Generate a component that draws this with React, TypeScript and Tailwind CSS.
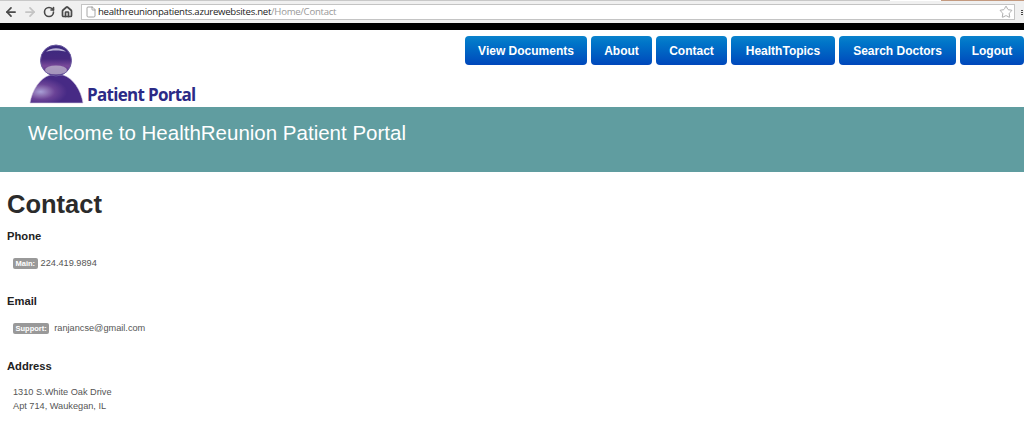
import React from 'react';
import { ArrowLeft, ArrowRight, RotateCw, House, File, Star } from 'lucide-react';

const navItems = [
  { label: 'View Documents', width: 'w-[122px]' },
  { label: 'About', width: 'w-[61px]' },
  { label: 'Contact', width: 'w-[71px]' },
  { label: 'HealthTopics', width: 'w-[104px]' },
  { label: 'Search Doctors', width: 'w-[117px]' },
  { label: 'Logout', width: 'w-[64px]' },
];

function Logo() {
  return (
    <div className="flex items-end h-[74px] pl-[29px]">
      <svg width="56" height="60" viewBox="0 0 56 60" className="shrink-0">
        <defs>
          <linearGradient id="headFill" x1="0" y1="0" x2="0" y2="1">
            <stop offset="0" stopColor="#3a2a7e" />
            <stop offset="0.45" stopColor="#46297f" />
            <stop offset="0.68" stopColor="#7a4a9a" />
            <stop offset="1" stopColor="#43287f" />
          </linearGradient>
          <radialGradient id="bodyGlow" cx="0.2" cy="0.6" r="0.5">
            <stop offset="0" stopColor="#a89fd6" />
            <stop offset="0.3" stopColor="#8a6cb0" />
            <stop offset="0.55" stopColor="#6a4296" />
            <stop offset="1" stopColor="#472a85" />
          </radialGradient>
        </defs>
        <path d="M1 59 C3 46 11 34 21 31 L34 31 C44 34 52 46 54 59 Z" fill="url(#bodyGlow)" stroke="#cfc8e0" strokeWidth="0.6" />
        <circle cx="27" cy="16.5" r="15.5" fill="url(#headFill)" stroke="#6a5aa0" strokeWidth="1" />
        <path d="M17 8 C21 3 33 3 37 8 C33 6 21 6 17 8 Z" fill="#c9c3e0" opacity="0.9" />
        <ellipse cx="27" cy="26" rx="11" ry="4.5" fill="#b9aec9" opacity="0.8" />
      </svg>
      <span className="font-['Open_Sans',sans-serif] font-bold text-[17px] leading-[22px] tracking-[-0.7px] text-[#2b2a86] ml-[2px] mb-[-2px]">
        Patient Portal
      </span>
    </div>
  );
}

export default function App() {
  return (
    <div className="w-[1024px] h-[434px] overflow-hidden bg-white font-['Liberation_Sans',Arial,sans-serif]">
      {/* browser chrome */}
      <div className="flex h-[1px]">
        <div className="w-[890px] bg-[#c8c8c8]" />
        <div className="w-[51px] bg-white" />
        <div className="flex-1 bg-[#c49a80]" />
      </div>
      <div className="h-[22px] bg-[#f0f0f0] flex items-center pl-[4px]">
        <ArrowLeft size={14} strokeWidth={3} className="text-[#4a4a4a]" />
        <ArrowRight size={14} strokeWidth={3} className="text-[#c4c4c4] ml-[5px]" />
        <RotateCw size={12} strokeWidth={3.2} className="text-[#4a4a4a] ml-[6px]" />
        <House size={12} strokeWidth={3.4} className="text-[#4a4a4a] ml-[6px]" />
        <div className="w-[934px] h-[16px] ml-[8px] bg-white border border-[#c4c4c4] flex items-center pl-[3px] pr-[1px]">
          <File size={12} strokeWidth={1.5} className="text-[#8a8a8a]" />
          <span className="ml-[1px] text-[9.6px] tracking-[-0.27px] text-[#222] font-['Open_Sans',sans-serif]">
            healthreunionpatients.azurewebsites.net<span className="text-[#999]">/Home/Contact</span>
          </span>
          <Star size={14} strokeWidth={1.4} className="ml-auto text-[#9a9a9a]" />
        </div>
        <div className="ml-[6px] flex flex-col gap-[1px]">
          <div className="w-[2px] h-[1px] bg-[#444]" />
          <div className="w-[2px] h-[1px] bg-[#444]" />
          <div className="w-[2px] h-[1px] bg-[#444]" />
        </div>
      </div>
      <div className="h-[7px] bg-black" />

      {/* header */}
      <div className="h-[77px] flex justify-between">
        <Logo />
        <nav className="flex gap-[4px] pt-[6px]">
          {navItems.map((item) => (
            <a
              key={item.label}
              className={`${item.width} h-[29px] flex items-center justify-center rounded-[4px] bg-gradient-to-b from-[#0a82cc] to-[#0047bb] text-white text-[12px] font-bold`}
            >
              {item.label}
            </a>
          ))}
        </nav>
      </div>

      <div className="h-[65px] bg-[#609da0] pl-[28px] pt-[13px]">
        <p className="text-[20.5px] leading-[26px] text-white">Welcome to HealthReunion Patient Portal</p>
      </div>

      {/* contact */}
      <div className="pl-[7px] pt-[17px] text-[#555]">
        <h1 className="text-[25.5px] leading-[30px] font-bold text-[#2b2b2b]">Contact</h1>

        <h2 className="mt-[10px] text-[11.2px] leading-[14px] font-bold text-[#222]">Phone</h2>
        <div className="mt-[13px] pl-[6px] flex items-center text-[9.2px] leading-[14px]">
          <span className="bg-[#999] text-white font-bold text-[7.5px] leading-[11px] rounded-[2px] px-[2.5px]">Main:</span>
          <span className="ml-[3px]">224.419.9894</span>
        </div>

        <h2 className="mt-[24px] text-[11.2px] leading-[14px] font-bold text-[#222]">Email</h2>
        <div className="mt-[13px] pl-[6px] flex items-center text-[9.2px] leading-[14px]">
          <span className="bg-[#999] text-white font-bold text-[7.5px] leading-[11px] rounded-[2px] px-[2.5px]">Support:</span>
          <span className="ml-[5px]">ranjancse@gmail.com</span>
        </div>

        <h2 className="mt-[24px] text-[11.2px] leading-[14px] font-bold text-[#222]">Address</h2>
        <div className="mt-[12px] pl-[6px] text-[9.2px] leading-[14px]">
          <p>1310 S.White Oak Drive</p>
          <p>Apt 714, Waukegan, IL</p>
        </div>
      </div>
    </div>
  );
}
